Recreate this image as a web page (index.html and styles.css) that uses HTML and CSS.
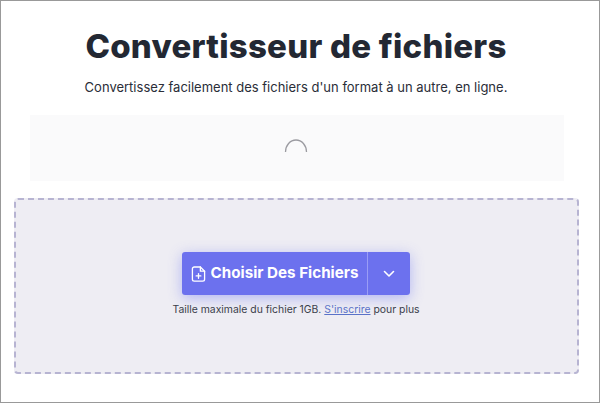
FILE: index.html
```html
<!DOCTYPE html>
<html lang="fr">
<head>
  <meta charset="UTF-8">
  <title>Convertisseur de fichiers</title>
  <link rel="stylesheet" href="styles.css">
</head>
<body>
  <div class="page">
    <h1>Convertisseur de fichiers</h1>
    <p class="subtitle">Convertissez facilement des fichiers d'un format à un autre, en ligne.</p>

    <div class="ad-box">
      <svg class="spinner" width="24" height="15" viewBox="0 0 24 15">
        <path d="M1.5 14 A 10.5 12 0 0 1 22.5 14" fill="none" stroke="#9b9ba1" stroke-width="1.3"/>
      </svg>
    </div>

    <div class="dropzone">
      <div class="btn-group">
        <button class="btn-main">
          <svg width="15" height="18" viewBox="0 0 16 18" fill="none" stroke="#fff" stroke-width="1.4" stroke-linejoin="round" stroke-linecap="round">
            <path d="M10 1.5H3.5a2 2 0 0 0-2 2v11a2 2 0 0 0 2 2h9a2 2 0 0 0 2-2V6z"/>
            <path d="M10 1.5V6h4.5"/>
            <path d="M8 8.5v5M5.5 11h5"/>
          </svg>
          <span class="btn-label">Choisir Des Fichiers</span>
        </button>
        <button class="btn-arrow">
          <svg width="12" height="8" viewBox="0 0 12 8" fill="none" stroke="#fff" stroke-width="1.6" stroke-linecap="round" stroke-linejoin="round">
            <path d="M1.5 1.5 6 6l4.5-4.5"/>
          </svg>
        </button>
      </div>
      <p class="limit">Taille maximale du fichier 1GB. <a href="#">S'inscrire</a> pour plus</p>
    </div>
  </div>
</body>
</html>
```
FILE: styles.css
```css
* {
  box-sizing: border-box;
}
body {
  margin: 0;
  background-color: #fff;
  font-family: Inter, "Noto Sans", sans-serif;
}
.page {
  width: 600px;
  height: 403px;
  padding: 0 20px 0 13px;
  border: 1px solid #999;
  overflow: hidden;
}
h1 {
  margin: 24px 0 0;
  width: 564px;
  height: 42px;
  font-size: 33px;
  line-height: 42px;
  font-weight: 800;
  letter-spacing: 0.25px;
  text-align: center;
  color: #232833;
  white-space: nowrap;
}
.subtitle {
  margin: 11px 0 0;
  width: 564px;
  height: 18px;
  font-size: 13px;
  line-height: 18px;
  text-align: center;
  color: #2a2e38;
  white-space: nowrap;
}
.ad-box {
  width: 534px;
  height: 66px;
  margin: 19px 0 0 16px;
  padding: 23px 2px 0 0;
  background-color: #fafafb;
  display: flex;
  justify-content: center;
  align-items: flex-start;
}
.dropzone {
  width: 565px;
  height: 176px;
  margin-top: 17px;
  padding: 52px 1px 0 0;
  background-color: #eeedf3;
  border: 2px dashed #b7b4d2;
  border-radius: 4px;
  display: flex;
  flex-direction: column;
  align-items: center;
}
.btn-group {
  display: flex;
  height: 43px;
  border-radius: 3px;
  box-shadow: 0 3px 14px rgba(104, 112, 245, 0.45);
}
.btn-group button {
  border: none;
  background-color: #6c71ee;
  color: #fff;
  font-family: inherit;
  padding: 0;
  display: flex;
  align-items: center;
  justify-content: center;
}
.btn-main {
  width: 185px;
  gap: 5px;
  font-size: 15.2px;
  font-weight: 700;
  border-radius: 3px 0 0 3px;
  white-space: nowrap;
}
.btn-label {
  margin-top: -2px;
}
.btn-arrow {
  width: 43px;
  border-left: 1px solid #9a9df6 !important;
  border-radius: 0 3px 3px 0;
}
.limit {
  margin: 8px 0 0;
  font-size: 10.4px;
  line-height: 14px;
  color: #3a3e4a;
  white-space: nowrap;
}
.limit a {
  color: #5a72c8;
}
```
